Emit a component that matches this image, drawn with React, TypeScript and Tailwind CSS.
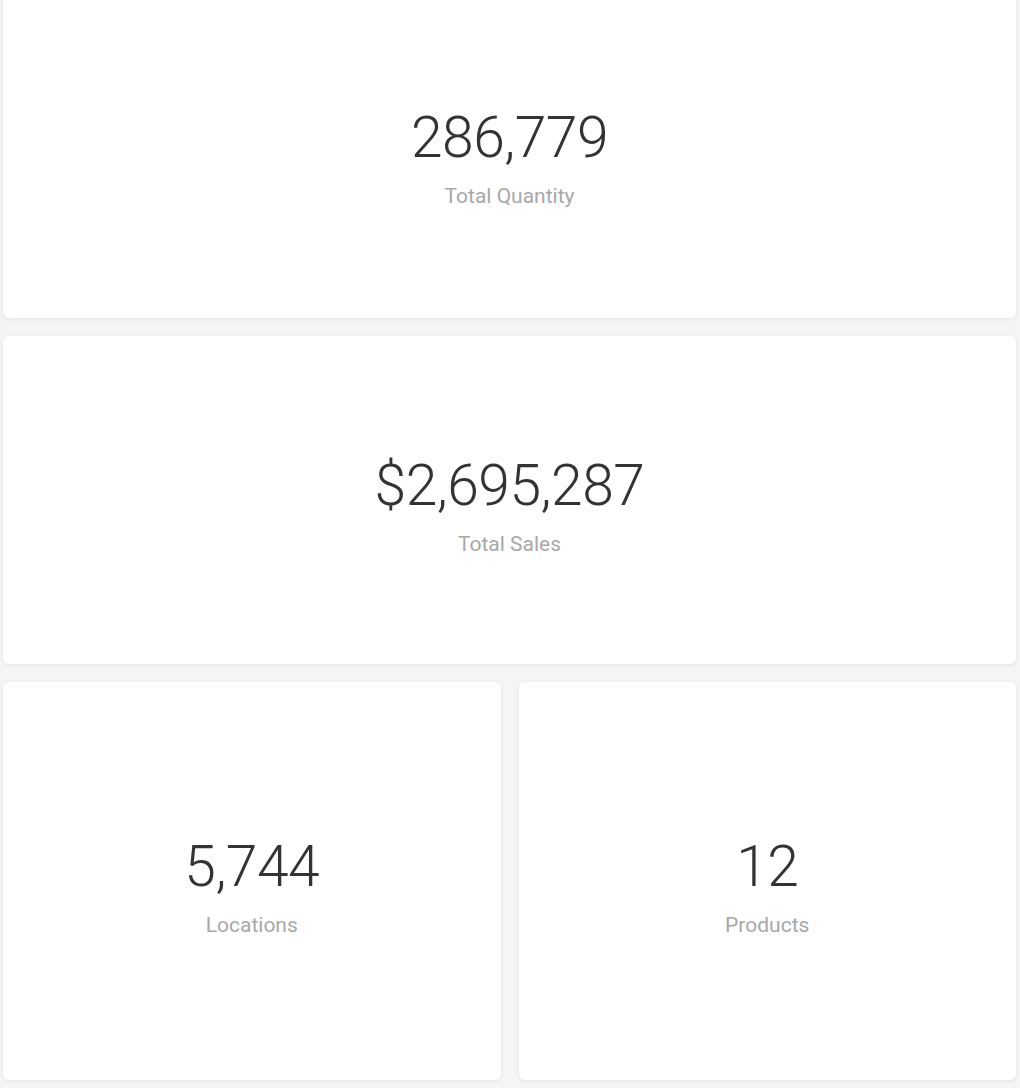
const stats = [
  { value: '286,779', label: 'Total Quantity' },
  { value: '$2,695,287', label: 'Total Sales' },
]

function StatCard({ value, label, className }: { value: string; label: string; className: string }) {
  return (
    <div
      className={`flex flex-col items-center justify-center rounded-md bg-white shadow-[0_1px_4px_rgba(0,0,0,0.08)] ${className}`}
    >
      <div className="text-[57px] font-light leading-none text-[#333333] tracking-[-0.5px]">{value}</div>
      <div className="mt-[20px] text-[21px] leading-none text-[#a8a8a8]">{label}</div>
    </div>
  )
}

export default function App() {
  return (
    <div
      className="min-h-[1088px] w-full overflow-hidden bg-[#f5f5f5]"
      style={{ fontFamily: 'Roboto, "Open Sans", sans-serif' }}
    >
      <div className="-mt-[10px] flex flex-col gap-[18px] pl-[3px] pr-[4px]">
        <StatCard value={stats[0].value} label={stats[0].label} className="h-[328px] pt-[8px]" />
        <StatCard value={stats[1].value} label={stats[1].label} className="h-[328px] pt-[12px]" />
        <div className="grid grid-cols-2 gap-[18px]">
          <StatCard value="5,744" label="Locations" className="h-[398px] pt-[11px]" />
          <StatCard value="12" label="Products" className="h-[398px] pt-[11px]" />
        </div>
      </div>
    </div>
  )
}
